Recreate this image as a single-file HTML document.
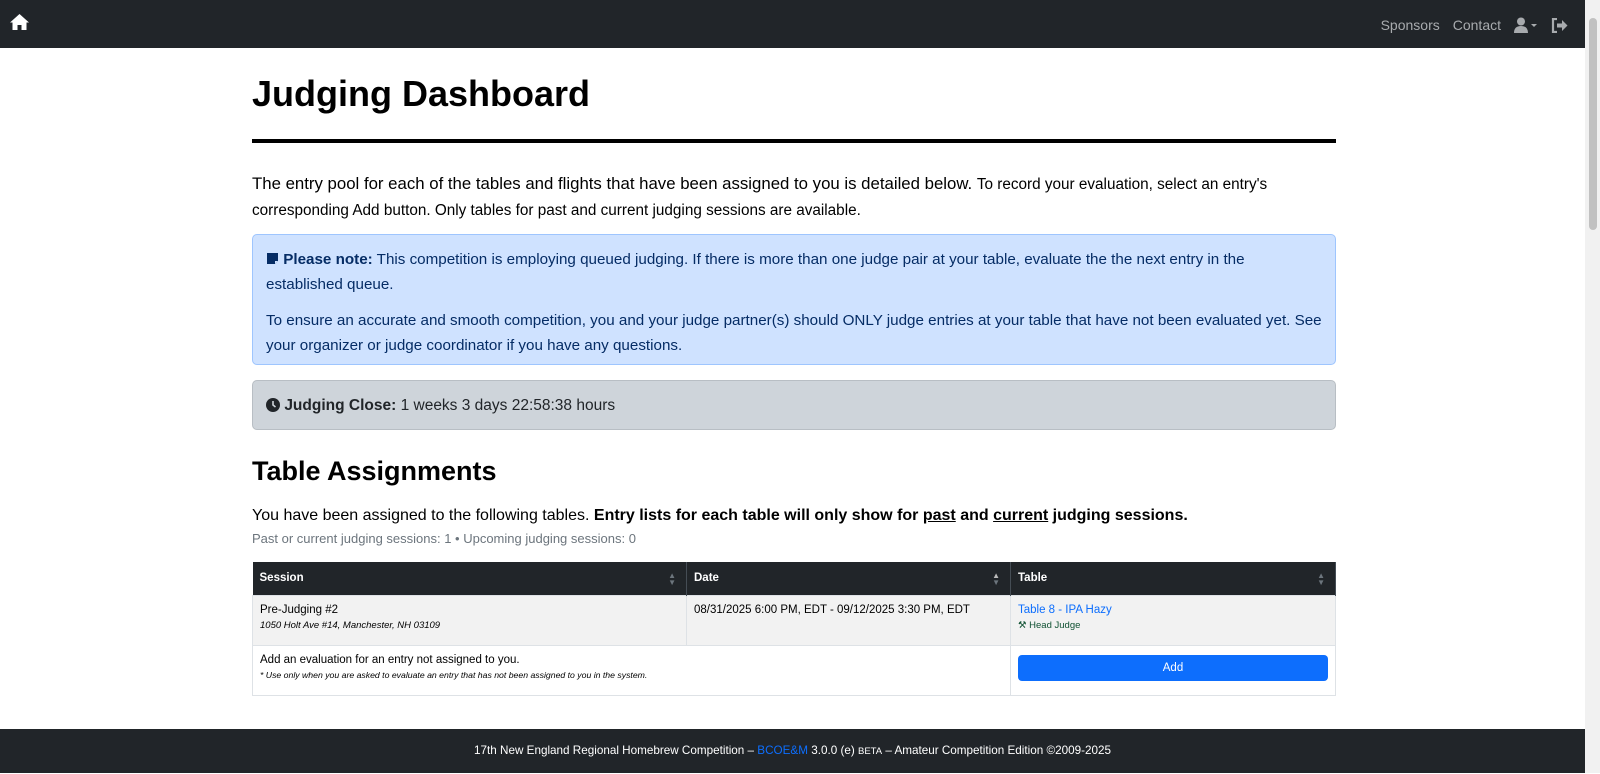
<!DOCTYPE html>
<html><head><meta charset="utf-8"><style>
*{box-sizing:border-box;margin:0;padding:0}
body{width:1600px;height:773px;overflow:hidden;background:#fff;font-family:"Liberation Sans",sans-serif;color:#212529;position:relative}
.nav{position:absolute;left:0;top:0;width:1585px;height:48px;background:#212529}
.nav .r{position:absolute;right:17px;top:17px;color:#a8abae;font-size:14px;display:flex;gap:13px;align-items:center}
.sb{position:absolute;left:1585px;top:0;width:15px;height:773px;background:#f1f1f1}
.sb div{position:absolute;left:4px;top:18px;width:8px;height:212px;background:#c1c1c1;border-radius:4px}
.c{position:absolute;left:252px;width:1084px}
h1{font-size:36px;font-weight:bold;color:#000}
.hr{height:4px;background:#000}
.p{font-size:16.8px;line-height:25px;color:#000}
.alert{border-radius:5px;padding:12px 13px;font-size:15.2px;line-height:25px}
.blue{background:#cfe2ff;border:1px solid #9ec5fe;color:#052c65}
.grey{background:#ced4da;border:1px solid #b8bec4;color:#212529}
h2{font-size:27px;font-weight:bold;color:#000}
table{border-collapse:collapse;width:1084px;font-size:11.5px}
th{background:#212529;color:#fff;text-align:left;height:33px;padding:0 7px;border-right:1px solid #454d55;position:relative}
td{border:1px solid #dee2e6;padding:8px 7px;vertical-align:top;color:#000}
.foot{position:absolute;left:0;top:729px;width:1585px;height:44px;background:#212529;color:#fff;font-size:11.7px;text-align:center;line-height:44px}
.arr{position:absolute;right:10px;top:10px;font-size:8px;line-height:7px;color:#6c757d}
</style></head><body>
<div class="nav">
<svg style="position:absolute;left:9px;top:13px" width="21" height="18" viewBox="0 0 21 18"><path d="M10.5 1 L20 9.5 L17.5 9.5 L17.5 17 L12.5 17 L12.5 12 L8.5 12 L8.5 17 L3.5 17 L3.5 9.5 L1 9.5 Z" fill="#fff"/></svg>
<div class="r"><span>Sponsors</span><span>Contact</span>
<svg width="24" height="16" viewBox="0 0 24 16"><circle cx="7" cy="4.5" r="4" fill="#a8abae"/><path d="M0 16 Q0 9 7 9 Q14 9 14 16Z" fill="#a8abae"/><path d="M17 7h6l-3 3z" fill="#a8abae"/></svg>
<svg width="17" height="15" viewBox="0 0 17 15"><path d="M6 1H2v13h4" stroke="#a8abae" stroke-width="2.2" fill="none"/><path d="M6 5.5h5V2l5.5 5.5L11 13V9.5H6z" fill="#a8abae"/></svg></div>
</div>
<div class="sb"><div></div></div>
<div class="c" style="top:73px"><h1>Judging Dashboard</h1></div>
<div class="c hr" style="top:139px"></div>
<div class="c p" style="top:171px">The entry pool for each of the tables and flights that have been assigned to you is detailed below. <span style="font-size:15.3px">To record your evaluation, select an entry's corresponding Add button. Only tables for past and current judging sessions are available.</span></div>
<div class="c alert blue" style="top:234px;height:131px">
<div><svg width="13" height="13" viewBox="0 0 13 13" style="vertical-align:-1px"><path d="M1 1h11v8l-3 3H1z" fill="#052c65"/><path d="M9 12V9h3" fill="#cfe2ff"/></svg> <b>Please note:</b> This competition is employing queued judging. If there is more than one judge pair at your table, evaluate the the next entry in the established queue.</div>
<div style="margin-top:11px">To ensure an accurate and smooth competition, you and your judge partner(s) should ONLY judge entries at your table that have not been evaluated yet. See your organizer or judge coordinator if you have any questions.</div></div>
<div class="c alert grey" style="top:380px;height:50px;padding-top:12px;font-size:15.5px">
<svg width="14" height="14" viewBox="0 0 14 14" style="vertical-align:-2px"><circle cx="7" cy="7" r="7" fill="#212529"/><path d="M7 3v4l2.5 2" stroke="#ced4da" stroke-width="1.6" fill="none"/></svg> <b>Judging Close:</b> 1 weeks 3 days 22:58:38 hours</div>
<div class="c" style="top:456px"><h2>Table Assignments</h2></div>
<div class="c" style="top:507px;font-size:16px;color:#000">You have been assigned to the following tables. <b>Entry lists for each table will only show for <u>past</u> and <u>current</u> judging sessions.</b></div>
<div class="c" style="top:531px;font-size:13px;color:#6c757d">Past or current judging sessions: 1 • Upcoming judging sessions: 0</div>
<div class="c" style="top:562px"><table>
<tr><th style="width:434px">Session<span class="arr">▲<br>▼</span></th><th style="width:324px">Date<span class="arr" style="color:#bbb">▲<br><span style="color:#6c757d">▼</span></span></th><th>Table<span class="arr">▲<br>▼</span></th></tr>
<tr style="background:#f2f2f2;height:50px"><td>Pre-Judging #2<br><i style="font-size:9.5px;line-height:20px">1050 Holt Ave #14, Manchester, NH 03109</i></td><td>08/31/2025 6:00 PM, EDT - 09/12/2025 3:30 PM, EDT</td><td><span style="color:#0d6efd">Table 8 - IPA Hazy</span><br><span style="font-size:9.5px;line-height:20px;color:#0f5132">&#9874; Head Judge</span></td></tr>
<tr style="height:50px"><td colspan="2">Add an evaluation for an entry not assigned to you.<br><i style="font-size:8.7px;line-height:18px">* Use only when you are asked to evaluate an entry that has not been assigned to you in the system.</i></td><td><div style="background:#0d6efd;color:#fff;text-align:center;height:26px;line-height:26px;border-radius:4px;margin-top:1px">Add</div></td></tr>
</table></div>
<div class="foot">17th New England Regional Homebrew Competition – <span style="color:#0d6efd">BCOE&amp;M</span> 3.0.0 (e) <span style="font-size:9.5px">BETA</span> – Amateur Competition Edition ©2009-2025</div>
</body></html>
